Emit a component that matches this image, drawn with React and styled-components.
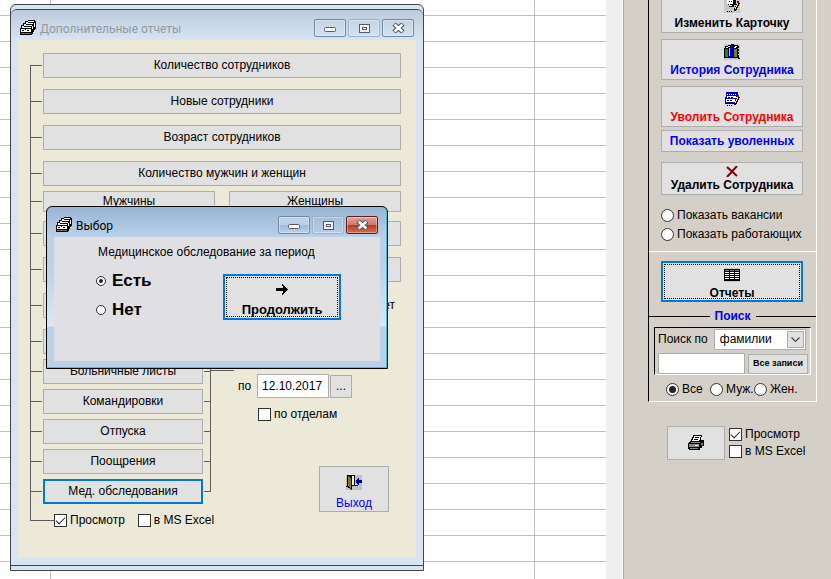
import React from "react";
import styled, { createGlobalStyle, css } from "styled-components";

const line = "#5c5c5c";

const GlobalStyle = createGlobalStyle`
  *, *::before, *::after { box-sizing: border-box; }
  body { margin: 0; background: #d4d0c8; color: #000; overflow: hidden; }
  body, button, input, select { font-family: "Liberation Sans", Arial, sans-serif; font-size: 12px; line-height: 15px; }
`;

const Screen = styled.div`
  display: flex;
  min-height: 100vh;
`;

const Sheet = styled.main`
  flex: 1;
  background:
    linear-gradient(#c0c0c0, #c0c0c0) 50px 0 / 1px 100% no-repeat,
    linear-gradient(#c0c0c0, #c0c0c0) 534px 0 / 1px 100% no-repeat,
    repeating-linear-gradient(#fff 0 25px, #c0c0c0 25px 26px) 0 -10px / 100% calc(100% + 10px) no-repeat;
`;

const ScrollTrack = styled.div`
  width: 18px;
  background: #efefef;
  border-right: 1px solid #a8a8a8;
  box-shadow: inset -1px 0 #fff;
`;

const Side = styled.aside`
  width: 207px;
  padding-left: 24px;
  background: #d4d0c8;
`;

const SidePanel = styled.section`
  width: 169px;
  border-left: 1px solid #000;
  border-right: 1px solid #fff;
  border-bottom: 1px solid #fff;
`;

const Actions = styled.div`
  display: flex;
  flex-direction: column;
  padding: 0 13px 0 12px;
  margin-top: -8px;
`;

const PushButton = styled.button`
  display: flex;
  flex-direction: column;
  align-items: center;
  justify-content: center;
  gap: ${(p) => p.$gap ?? 0}px;
  width: ${(p) => (p.$w ? `${p.$w}px` : "100%")};
  min-width: 0;
  height: ${(p) => p.$h ?? 25}px;
  margin: ${(p) => p.$top ?? 0}px 0 0;
  padding: ${(p) => p.$drop ?? 0}px 0 0;
  border: 1px solid #adadad;
  background: #e1e1e1;
  color: ${(p) => p.$color ?? "#000"};
  font-weight: ${(p) => (p.$bold ? 700 : 400)};
  white-space: nowrap;
  ${(p) => p.$size && css`font-size: ${p.$size}px;`}
  ${(p) => p.$selected && css`border: 2px solid #0078d7;`}
  ${(p) => p.$focus && css`outline: 1px dotted #000; outline-offset: -4px;`}
`;

const Stack = styled.div`
  display: flex;
  flex-direction: column;
  padding: ${(p) => p.$pad ?? "0"};
`;

const Inline = styled.div`
  display: flex;
  align-items: center;
  gap: ${(p) => p.$gap ?? 0}px;
  padding: ${(p) => p.$pad ?? "0"};
`;

const SexRow = styled.div`
  display: grid;
  grid-template-columns: repeat(3, 44px);
  padding: 7px 0 4px 17px;
`;

const Choice = styled.label`
  display: flex;
  align-items: center;
  gap: 3px;
  height: ${(p) => p.$h ?? 15}px;
  white-space: nowrap;
`;

const Check = styled.input`
  appearance: none;
  display: grid;
  place-items: center;
  width: 13px;
  height: 13px;
  margin: 0;
  flex-shrink: 0;
  border: 1px solid #333;
  background: #fff;
  &:checked::after {
    content: "";
    width: 9px;
    height: 5px;
    border-left: 1px solid #222;
    border-bottom: 1px solid #222;
    transform: translateY(-1px) rotate(-45deg);
  }
`;

const Radio = styled.input`
  appearance: none;
  display: grid;
  place-items: center;
  width: ${(p) => (p.$compact ? 10 : 13)}px;
  height: ${(p) => (p.$compact ? 10 : 13)}px;
  margin: 0;
  flex-shrink: 0;
  border: 1px solid #333;
  border-radius: 50%;
  background: #fff;
  &:checked::after {
    content: "";
    width: ${(p) => (p.$compact ? 4 : 7)}px;
    height: ${(p) => (p.$compact ? 4 : 7)}px;
    border-radius: 50%;
    background: #222;
  }
`;

const Divider = styled.hr`
  margin: 7px 0 9px;
  border: 0;
  border-top: 1px solid #fff;
`;

const Legend = styled.h2`
  display: flex;
  align-items: center;
  gap: 5px;
  margin: 7px 0 3px;
  color: #0000ff;
  font-size: 12px;
  font-weight: 700;
  &::before, &::after { content: ""; flex: 1; height: 1px; background: #000; }
`;

const SearchBox = styled.div`
  margin: 0 5px;
  padding: 1px 2px 0 3px;
  border: 1px solid #fff;
  border-top-color: #000;
  border-left-color: #000;
`;

const SelectFrame = styled.div`
  display: flex;
  align-items: center;
  width: 92px;
  height: 21px;
  border: 1px solid #adadad;
  background: #fff;
`;

const Select = styled.select`
  appearance: none;
  flex: 1;
  min-width: 0;
  height: 19px;
  padding: 0 0 0 5px;
  border: 0;
  background: transparent;
`;

const DropMark = styled.span`
  display: grid;
  place-items: center;
  width: 17px;
  height: 17px;
  margin-right: 1px;
  border: 1px solid #adadad;
  background: #e1e1e1;
`;

const TextInput = styled.input`
  width: ${(p) => p.$w}px;
  height: ${(p) => p.$h}px;
  padding: 0 4px;
  border: 1px solid #adadad;
  background: #fff;
`;

const PrintRow = styled.div`
  display: flex;
  gap: 4px;
  padding: 24px 0 0 19px;
`;

const BackFrame = styled.div`
  position: absolute;
  left: 10px;
  top: 4px;
  width: 414px;
  padding: 4px 0;
  border: 1px solid #444;
  border-radius: 6px 6px 0 0;
  background: #d7e4f2;
  overflow: hidden;
`;

const Window = styled.section`
  border-top: 1px solid #444;
  border-bottom: 1px solid #444;
  border-radius: 6px 6px 0 0;
  padding: 0 7px 7px;
  background: linear-gradient(#bccbdc, #d7e4f2 30px);
`;

const Dialog = styled.section`
  position: absolute;
  left: 46px;
  top: 206px;
  width: 342px;
  padding: 0 7px 7px;
  border: 1px solid #000;
  border-radius: 6px 6px 0 0;
  box-shadow: inset -1px -1px #35c5e8;
  background: linear-gradient(#98b4d2, #b9d1ea 30px, #b9d1ea 60px, #dbe8f6 119px, #b9d1ea 120px);
`;

const TitleBar = styled.header`
  display: flex;
  align-items: center;
  height: 30px;
  padding: 6px 2px 0 2px;
  gap: 2px;
`;

const Title = styled.h1`
  flex: 1;
  margin: 0;
  padding: 2px 0 0 2px;
  color: ${(p) => (p.$muted ? "#9099a4" : "#000")};
  font: 400 12px/16px Roboto, "Open Sans", sans-serif;
`;

const CaptionButton = styled.button`
  display: grid;
  place-items: center;
  width: 32px;
  height: 18px;
  padding: 0;
  border: 1px solid ${(p) => (p.$dim ? "#9bb0c9" : "#7088a8")};
  border-radius: 2px;
  background: ${(p) => (p.$active ? "linear-gradient(#bcd0e6 48%, #9fb9d6 50%, #b9d3ec)" : "transparent")};
  box-shadow: inset 0 0 0 1px rgba(255, 255, 255, 0.35);
  ${(p) => p.$close && css`
    border-color: #5a1d22;
    background: linear-gradient(#e0a59b 0, #cf7768 48%, #b63a26 50%, #d4704f);
  `}
`;

const ReportBody = styled.div`
  height: 518px;
  padding: 13px 15px 0 12px;
  background: #ece9d8;
`;

const Tree = styled.div`
  background: linear-gradient(${line}, ${line}) 0 12px / 1px calc(100% - 19px) no-repeat;
`;

const Branch = styled.div`
  display: flex;
  align-items: center;
  gap: ${(p) => p.$gap ?? 0}px;
  margin-top: ${(p) => p.$top ?? 0}px;
  &::before {
    content: "";
    flex: 0 0 ${(p) => p.$tick ?? 12}px;
    height: 1px;
    margin-right: ${(p) => (p.$gap ? 1 - p.$gap : p.$tick ? 0 : 1)}px;
    background: ${line};
  }
`;

const JoinedList = styled.div`
  display: flex;
  flex-direction: column;
  gap: 5px;
  width: 181px;
  background: linear-gradient(${line}, ${line}) 180px 12px / 1px calc(100% - 24px) no-repeat;
`;

const JoinedBranch = styled(Branch)`
  &::after {
    content: "";
    flex: 0 0 7px;
    height: 1px;
    margin-left: 1px;
    background: ${line};
  }
`;

const Lower = styled.div`
  display: flex;
  margin-top: 11px;
`;

const Connector = styled.span`
  width: 23px;
  height: 1px;
  margin-top: 41px;
  background: ${line};
`;

const Period = styled.div`
  flex: 1;
  margin-bottom: -10px;
  padding: 16px 0 0 4px;
`;

const ExitSlot = styled.div`
  display: flex;
  justify-content: flex-end;
  padding: 44px 12px 0 0;
`;

const YearsLabel = styled.span`
  flex: 1;
  padding-right: 6px;
  text-align: right;
`;

const DateLabel = styled.label`
  width: 18px;
`;

const DialogBody = styled.div`
  height: 124px;
  padding: 8px 0 0 42px;
  background: #e0dfe4;
`;

const Prompt = styled.p`
  margin: 0 0 6px 2px;
`;

const Answer = styled.label`
  display: flex;
  align-items: center;
  gap: 6px;
  height: 29px;
  font-size: 17px;
  line-height: 20px;
  font-weight: 700;
`;

const AnswerRow = styled.div`
  display: flex;
  align-items: center;
  justify-content: space-between;
  padding-right: 39px;
`;

const Drawing = styled.svg`
  display: block;
  flex-shrink: 0;
`;

function Icon({ w = 16, h = 16, children }) {
  return (
    <Drawing width={w} height={h} viewBox={`0 0 ${w} ${h}`} shapeRendering="crispEdges" aria-hidden="true">
      {children}
    </Drawing>
  );
}

const CardsIcon = () => (
  <Icon>
    <path d="M8 0h7v1h1v8h-1v1h-1v2h-1v2h-1v1H0V8h1V5h2V3h2V1h3z" fill="#000" />
    <path d="M8 1h6v1H8zM6 2h2v1h5v1H6zM4 4h2v1h6v1H4zM2 6h2v1h7v1H2zM1 9h10v3H1z" fill="#fff" />
    <path d="M12 6h1v3h-1zM14 3h1v4h-1z" fill="#fff" />
    <path d="M2 10h2v1H2zM5 9h1v1H5zM7 10h2v1H7z" fill="#000" />
    <path d="M1 13h10v1H1z" fill="#7a6a48" />
  </Icon>
);

const Pencil = () => (
  <>
    <path d="M13 4h2v2h1v1h-1v2h-1v2h-1v2h-1v1h-2v-3h1V9h1V7h1z" fill="#000" />
    <path d="M13 6h1v2h-1v2h-1v2h-1v-2h1V8h1z" fill="#ffff30" />
    <path d="M13 4h2v2h-2z" fill="#900" />
    <path d="M3 14h1v1H3zM5 14h1v1H5zM7 14h1v1H7z" fill="#000" />
  </>
);

const EditIcon = () => (
  <Icon>
    <path d="M0 0h16v16H0z" fill="#c8c8c8" />
    <path d="M1 1h3v7h1v2h5V8h2V2H9V1z" fill="#000" />
    <path d="M2 1h5v1h2v5H8v2H5V7H3V3H2z" fill="#fff" />
    <path d="M5 4h1v1H5zM7 4h1v1H7zM6 7h2v1H6z" fill="#000" />
    <Pencil />
  </Icon>
);

const BooksIcon = () => (
  <Icon>
    <path d="M0 0h16v16H0z" fill="#c8c8c8" />
    <path d="M0 4h1V2h3V1h3V0h3v1h4v1h1v12h1v1h-2v-1H0z" fill="#000" />
    <path d="M1 5h3v8H1z" fill="#008080" />
    <path d="M2 3h2v1H2zM4 2h2v1H4zM11 2h2v1h-2zM10 3h2v1h-2z" fill="#fff" />
    <path d="M5 4h2V1h2v12H5z" fill="#0000d8" />
    <path d="M5 4h1v8H5z" fill="#b8c8ff" />
    <path d="M10 5h3v8h-3z" fill="#808000" />
    <path d="M14 4h1v1h-1zM14 7h1v1h-1zM14 10h1v1h-1z" fill="#ddd" />
  </Icon>
);

const DismissIcon = () => (
  <Icon>
    <path d="M2 1h12v3h-1v2H2zM1 6h11v6H1z" fill="#0000c8" />
    <path d="M3 3h1v1H3zM5 3h1v1H5zM7 3h1v1H7zM9 3h1v1H9zM11 3h1v1h-1zM3 5h9v2H3zM2 8h9v3H2z" fill="#fff" />
    <path d="M4 6h2v1H4zM7 6h2v1H7zM3 9h2v1H3zM6 9h2v1H6zM1 12h9v1H1z" fill="#000" />
    <Pencil />
  </Icon>
);

const DeleteIcon = () => (
  <Drawing width="12" height="11" viewBox="0 0 12 11" aria-hidden="true">
    <path d="M1 1l10 9M11 0L1 11" fill="none" stroke="#800000" strokeWidth="2" />
  </Drawing>
);

const TableIcon = () => (
  <Icon h={14}>
    <path d="M0 0h16v14H0z" fill="#c8c8c8" />
    <path d="M0 1h16v12H0z" fill="#000" />
    <path d="M1 4h14v1H1zM1 6h14v1H1zM1 8h14v1H1zM1 10h14v1H1z" fill="#fff" />
    <path d="M5 2h1v11H5zM10 2h1v11h-1z" fill="#000" />
    <path d="M1 2h4v1H1zM6 2h4v1H6zM11 2h4v1h-4z" fill="#777" />
  </Icon>
);

const PrinterIcon = () => (
  <Icon w={18}>
    <path d="M6 0h9v2h-1v3h3v6h-2v2h-2v2H2v-1H1V8l3-3V4h1V2h1z" fill="#000" />
    <path d="M7 1h7v1h-1v3h-1v1H5V5h1V3h1z" fill="#fff" />
    <path d="M8 2h4v1H8zM7 4h4v1H7z" fill="#000" />
    <path d="M4 7h9v1H3zM2 9h10v3H2zM3 13h8v1H3zM14 8h2v2h-2z" fill="#888" />
    <path d="M8 10h3v1H8z" fill="#fff" />
  </Icon>
);

const ExitIcon = () => (
  <Icon>
    <path d="M0 0h16v15H0z" fill="#c0c0c0" />
    <path d="M1 0h8v10h3v1H6v4H5v-1H4v-1H2v-1H0v-1h1z" fill="#000" />
    <path d="M6 1h2v9H6z" fill="#eee" />
    <path d="M2 1l3 3v10l-3-3z" fill="#808000" />
    <path d="M10 5h1V4h1V3h1v2h3v3h-3v2h-1V9h-1V8h-1z" fill="#000090" />
  </Icon>
);

const ArrowIcon = () => (
  <Icon w={12} h={11}>
    <path d="M0 4h7V2H6V0h1v1h1v1h1v1h1v1h1v1h1v1h-1v1h-1v1H9v1H8v1H7v1H6V9h1V7H0z" fill="#000" />
  </Icon>
);

const MinimizeIcon = () => (
  <Drawing width="12" height="10" viewBox="0 0 12 10" aria-hidden="true">
    <rect x="0.5" y="4.5" width="11" height="4" rx="1" fill="#fff" stroke="#555c68" />
  </Drawing>
);

const MaximizeIcon = () => (
  <Icon w={11} h={9}>
    <path d="M0 0h11v9H0z" fill="#555c68" />
    <path d="M1 1h9v7H1z" fill="#eef2f8" />
    <path d="M3 3h5v3H3z" fill="#555c68" />
    <path d="M4 4h3v1H4z" fill="#eef2f8" />
  </Icon>
);

const CloseIcon = () => (
  <Drawing width="13" height="10" viewBox="0 0 13 10" aria-hidden="true">
    <path d="M2 1l9 8M11 1L2 9" fill="none" stroke="#4c5564" strokeWidth="4.6" />
    <path d="M2.6 1.5l7.8 7M10.4 1.5L2.6 8.5" fill="none" stroke="#fff" strokeWidth="2.4" />
  </Drawing>
);

const ChevronIcon = () => (
  <Drawing width="9" height="6" viewBox="0 0 9 6" aria-hidden="true">
    <path d="M0.5 0.5l4 4 4-4" fill="none" stroke="#444" strokeWidth="1.2" />
  </Drawing>
);

function Caption({ title, active }) {
  return (
    <TitleBar>
      <CardsIcon />
      <Title $muted={!active}>{title}</Title>
      <CaptionButton type="button" aria-label="Свернуть" $active={active}><MinimizeIcon /></CaptionButton>
      <CaptionButton type="button" aria-label="Развернуть" $dim><MaximizeIcon /></CaptionButton>
      <CaptionButton type="button" aria-label="Закрыть" $close={active}><CloseIcon /></CaptionButton>
    </TitleBar>
  );
}

function CheckOption({ label, checked, h }) {
  return (
    <Choice $h={h}>
      <Check type="checkbox" defaultChecked={checked} />
      {label}
    </Choice>
  );
}

function RadioOption({ label, name, checked, h }) {
  return (
    <Choice $h={h}>
      <Radio type="radio" name={name} defaultChecked={checked} />
      {label}
    </Choice>
  );
}

const reports = ["Количество сотрудников", "Новые сотрудники", "Возраст сотрудников", "Количество мужчин и женщин"];
const periodReports = ["", "Больничные листы", "Командировки", "Отпуска", "Поощрения", "Мед. обследования"];

function ReportsWindow() {
  return (
    <BackFrame>
      <Window>
        <Caption title="Дополнительные отчеты" />
        <ReportBody>
          <Tree>
            {reports.map((name, i) => (
              <Branch key={name} $top={i ? 11 : 0}>
                <PushButton type="button">{name}</PushButton>
              </Branch>
            ))}
            <Branch $top={5} $gap={14}>
              <PushButton type="button" $h={21}>Мужчины</PushButton>
              <PushButton type="button" $h={21}>Женщины</PushButton>
            </Branch>
            <Branch $top={9}><PushButton type="button" /></Branch>
            <Branch $top={11}><PushButton type="button" /></Branch>
            <Branch $top={11}>
              <PushButton type="button" $w={172} />
              <YearsLabel>лет</YearsLabel>
            </Branch>
            <Lower>
              <JoinedList>
                {periodReports.map((name) => (
                  <JoinedBranch key={name}>
                    <PushButton type="button" $w={160} $selected={name === "Мед. обследования"}>{name}</PushButton>
                  </JoinedBranch>
                ))}
              </JoinedList>
              <Connector />
              <Period>
                <Inline $gap={1} $pad="0 0 5px 19px">
                  <TextInput $w={72} $h={24} aria-label="Начало периода" />
                  <PushButton type="button" $w={22} $h={23} aria-label="Выбрать дату" />
                </Inline>
                <Inline $gap={1}>
                  <DateLabel htmlFor="until">по</DateLabel>
                  <TextInput id="until" $w={72} $h={24} defaultValue="12.10.2017" />
                  <PushButton type="button" $w={22} $h={23}>...</PushButton>
                </Inline>
                <Inline $pad="9px 0 0 20px">
                  <CheckOption label="по отделам" />
                </Inline>
                <ExitSlot>
                  <PushButton type="button" $w={70} $h={46} $gap={5} $drop={7} $color="#0000ff">
                    <ExitIcon />
                    Выход
                  </PushButton>
                </ExitSlot>
              </Period>
            </Lower>
            <Branch $top={9} $tick={24}>
              <Inline $gap={13}>
                <CheckOption label="Просмотр" checked />
                <CheckOption label="в MS Excel" />
              </Inline>
            </Branch>
          </Tree>
        </ReportBody>
      </Window>
    </BackFrame>
  );
}

function ChoiceDialog() {
  return (
    <Dialog role="dialog" aria-label="Выбор">
      <Caption title="Выбор" active />
      <DialogBody>
        <Prompt>Медицинское обследование за период</Prompt>
        <AnswerRow>
          <div>
            <Answer><Radio $compact type="radio" name="exam" defaultChecked />Есть</Answer>
            <Answer><Radio $compact type="radio" name="exam" />Нет</Answer>
          </div>
          <PushButton type="button" $w={118} $h={46} $top={4} $gap={7} $drop={7} $size={13} $bold $selected $focus>
            <ArrowIcon />
            Продолжить
          </PushButton>
        </AnswerRow>
      </DialogBody>
    </Dialog>
  );
}

function Sidebar() {
  return (
    <Side>
      <SidePanel>
        <Actions>
          <PushButton type="button" $h={41} $gap={3} $drop={3} $bold><EditIcon />Изменить Карточку</PushButton>
          <PushButton type="button" $h={41} $top={6} $gap={3} $drop={3} $bold $color="#0000ff"><BooksIcon />История Сотрудника</PushButton>
          <PushButton type="button" $h={41} $top={6} $gap={3} $drop={3} $bold $color="#ff0000"><DismissIcon />Уволить Сотрудника</PushButton>
          <PushButton type="button" $h={22} $top={3} $bold $color="#0000ff">Показать уволенных</PushButton>
          <PushButton type="button" $h={33} $top={10} $gap={1} $drop={2} $bold><DeleteIcon />Удалить Сотрудника</PushButton>
        </Actions>
        <Stack $pad="11px 0 0 12px">
          <RadioOption name="staff" label="Показать вакансии" h={19} />
          <RadioOption name="staff" label="Показать работающих" h={19} />
        </Stack>
        <Divider />
        <Stack $pad="0 13px 0 12px">
          <PushButton type="button" $h={41} $gap={4} $drop={5} $bold $selected $focus><TableIcon />Отчеты</PushButton>
        </Stack>
        <Legend>Поиск</Legend>
        <SearchBox>
          <Inline $gap={6}>
            <label htmlFor="field">Поиск по</label>
            <SelectFrame>
              <Select id="field" defaultValue="фамилии"><option>фамилии</option></Select>
              <DropMark><ChevronIcon /></DropMark>
            </SelectFrame>
          </Inline>
          <Inline $gap={3} $pad="3px 0 0">
            <TextInput $w={87} $h={21} aria-label="Строка поиска" />
            <PushButton type="button" $w={61} $h={20} $size={9} $bold>Все записи</PushButton>
          </Inline>
        </SearchBox>
        <SexRow>
          <RadioOption name="sex" label="Все" checked />
          <RadioOption name="sex" label="Муж." />
          <RadioOption name="sex" label="Жен." />
        </SexRow>
      </SidePanel>
      <PrintRow>
        <PushButton type="button" $w={58} $h={34} aria-label="Печать"><PrinterIcon /></PushButton>
        <Stack>
          <CheckOption label="Просмотр" checked h={17} />
          <CheckOption label="в MS Excel" h={17} />
        </Stack>
      </PrintRow>
    </Side>
  );
}

export default function App() {
  return (
    <Screen>
      <GlobalStyle />
      <Sheet />
      <ScrollTrack />
      <Sidebar />
      <ReportsWindow />
      <ChoiceDialog />
    </Screen>
  );
}
